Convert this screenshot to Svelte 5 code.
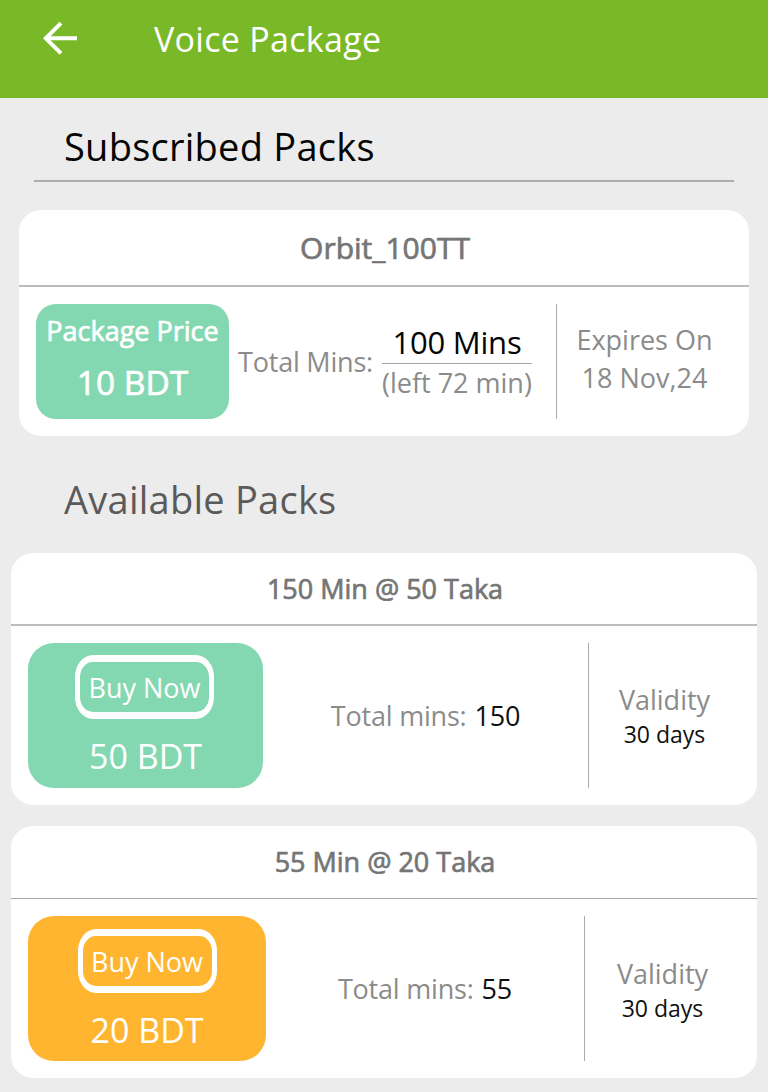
<script lang="ts">
	interface Pack {
		title: string;
		price: string;
		mins: number;
		validity: string;
		tone: 'green' | 'orange';
	}

	const subscribed = {
		title: 'Orbit_100TT',
		price: '10 BDT',
		total: '100 Mins',
		left: '(left 72 min)',
		expires: '18 Nov,24'
	};

	const packs: Pack[] = [
		{ title: '150 Min @ 50 Taka', price: '50 BDT', mins: 150, validity: '30 days', tone: 'green' },
		{ title: '55 Min @ 20 Taka', price: '20 BDT', mins: 55, validity: '30 days', tone: 'orange' }
	];
</script>

<div class="screen">
	<header class="app-bar">
		<button class="back" aria-label="Back">
			<svg width="36" height="36" viewBox="0 0 36 36" fill="none" stroke="currentColor" stroke-width="4">
				<path d="M35 17.3H4M19 2.2L3.8 17.3L19 32.4" />
			</svg>
		</button>
		<h1>Voice Package</h1>
	</header>

	<main>
		<h2 class="section-title underlined">Subscribed Packs</h2>

		<section class="card subscribed">
			<h3 class="card-title">{subscribed.title}</h3>
			<div class="card-body">
				<div class="price green">
					<span class="price-label">Package Price</span>
					<span class="amount">{subscribed.price}</span>
				</div>
				<div class="minutes">
					<span class="muted">Total Mins:</span>
					<div class="usage">
						<span class="total">{subscribed.total}</span>
						<span class="muted left">{subscribed.left}</span>
					</div>
				</div>
				<div class="validity">
					<span class="muted">Expires On</span>
					<span class="muted">{subscribed.expires}</span>
				</div>
			</div>
		</section>

		<h2 class="section-title available">Available Packs</h2>

		{#each packs as pack}
			<section class="card pack {pack.tone}-pack">
				<h3 class="card-title">{pack.title}</h3>
				<div class="card-body">
					<div class="price {pack.tone}">
						<button class="buy">Buy Now</button>
						<span class="amount">{pack.price}</span>
					</div>
					<div class="minutes">
						<span class="muted">Total mins:</span>
						<span class="count">{pack.mins}</span>
					</div>
					<div class="validity">
						<span class="muted">Validity</span>
						<span class="days">{pack.validity}</span>
					</div>
				</div>
			</section>
		{/each}
	</main>
</div>

<style>
	:global(body) {
		background: #ececec;
	}

	.screen {
		height: 1092px;
		overflow: hidden;
		background: #ececec;
		font-family: 'Open Sans', 'Noto Sans', sans-serif;
		white-space: nowrap;
	}

	h1,
	h2,
	h3 {
		margin: 0;
		font-weight: 400;
	}

	button {
		background: none;
		border: none;
		padding: 0;
		color: #fff;
		font-family: inherit;
	}

	.app-bar {
		display: flex;
		align-items: center;
		box-sizing: border-box;
		height: 98px;
		padding: 0 0 20px 42px;
		background: #79b928;
		color: #fff;
	}

	.back {
		display: flex;
		width: 112px;
	}

	h1 {
		font-size: 34px;
		line-height: 46px;
		letter-spacing: 0.3px;
	}

	.section-title {
		font-size: 38px;
		line-height: 52px;
		letter-spacing: 0.25px;
		color: #050505;
	}

	.underlined {
		margin: 0 34px 28px;
		padding: 22px 30px 8px;
		border-bottom: 2px solid #adadad;
	}

	.available {
		margin: 37px 64px 28px;
		color: #5a5a5a;
	}

	.card {
		background: #fff;
		border-radius: 22px;
	}

	.subscribed {
		margin: 0 19px;
	}

	.pack {
		margin: 0 11px 21px;
	}

	.card-title {
		padding-left: 2px;
		border-bottom: 2px solid #bcbcbc;
		color: #757575;
		text-align: center;
		-webkit-text-stroke: 0.7px currentColor;
	}

	.subscribed .card-title {
		font-size: 30px;
		line-height: 75px;
	}

	.pack .card-title {
		font-size: 27px;
		line-height: 71px;
	}

	.orange-pack .card-title {
		border-bottom: 1px solid #a8a8a8;
		line-height: 72px;
	}

	.card-body {
		display: grid;
		padding: 17px;
	}

	.subscribed .card-body {
		grid-template-columns: 193px 1fr 176px;
		height: 115px;
	}

	.pack .card-body {
		height: 145px;
	}

	.green-pack .card-body {
		grid-template-columns: 235px 1fr 152px;
	}

	.orange-pack .card-body {
		grid-template-columns: 238px 1fr 156px;
	}

	.price {
		display: flex;
		flex-direction: column;
		align-items: center;
		border-radius: 26px;
		color: #fff;
	}

	.green {
		background: #84d8b1;
	}

	.orange {
		background: #ffb52f;
	}

	.amount {
		font-size: 34px;
		line-height: 46px;
	}

	.subscribed .price {
		border-radius: 20px;
		-webkit-text-stroke: 0.7px currentColor;
	}

	.subscribed .amount {
		font-size: 33.5px;
	}

	.price-label {
		margin: 8px 0 10px;
		font-size: 27px;
		line-height: 37px;
	}

	.buy {
		box-sizing: border-box;
		width: 139px;
		height: 64px;
		margin: 12px 2px 14px 0;
		padding-top: 2px;
		border: 5px solid #fff;
		border-width: 7px 5px;
		border-radius: 18px / 22px;
		font-size: 27px;
		line-height: 48px;
	}

	.orange .buy {
		margin: 13px 0 14px;
	}

	.minutes {
		display: flex;
		align-items: center;
		justify-content: center;
		gap: 8px;
		letter-spacing: -0.2px;
	}

	.subscribed .minutes {
		justify-content: flex-start;
		gap: 9px;
		padding-left: 9px;
	}

	.muted {
		color: #8b8b8b;
		font-size: 27px;
		line-height: 37px;
	}

	.usage {
		display: flex;
		flex-direction: column;
		align-items: center;
	}

	.left {
		letter-spacing: 0;
	}

	.total {
		box-sizing: border-box;
		width: 100%;
		border-bottom: 1px solid #a5a5a5;
		color: #050505;
		font-size: 31px;
		line-height: 41px;
		text-align: center;
	}

	.count {
		color: #101010;
		font-size: 27px;
	}

	.validity {
		display: flex;
		flex-direction: column;
		align-items: center;
		justify-content: center;
		border-left: 1px solid #aaa;
	}

	.subscribed .validity {
		gap: 1px;
		padding-bottom: 7px;
	}

	.orange-pack .validity {
		padding-top: 2px;
	}

	.days {
		color: #101010;
		font-size: 23px;
		line-height: 33px;
	}
</style>
